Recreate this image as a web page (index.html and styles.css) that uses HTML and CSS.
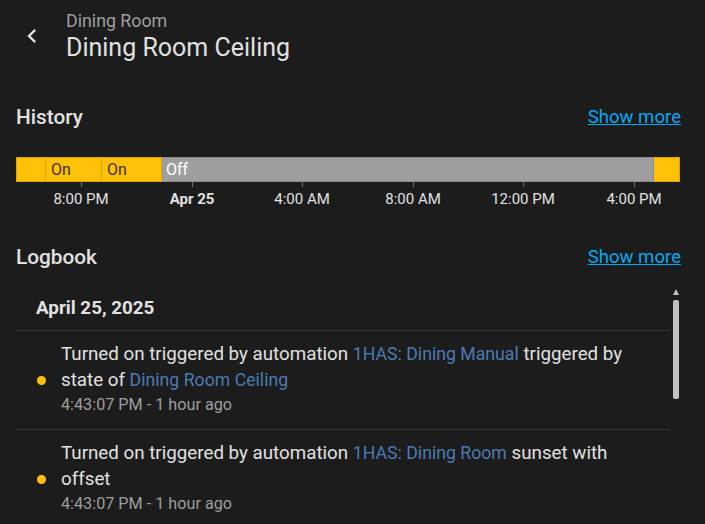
FILE: index.html
```html
<!DOCTYPE html>
<html>
<head>
<meta charset="utf-8">
<link rel="stylesheet" href="styles.css">
</head>
<body>
<div class="page">
  <header class="header">
    <button class="back" aria-label="Back">
      <svg viewBox="0 0 24 24" width="28" height="28"><path fill="currentColor" d="M15.41,16.58L10.83,12L15.41,7.41L14,6L8,12L14,18L15.41,16.58Z"/></svg>
    </button>
    <div class="titles">
      <div class="subtitle">Dining Room</div>
      <div class="title">Dining Room Ceiling</div>
    </div>
  </header>

  <section class="section history">
    <div class="section-head">
      <h2>History</h2>
      <a class="more" href="#">Show more</a>
    </div>
    <div class="timeline">
      <div class="bar">
        <div class="seg on" style="width:30px"></div>
        <div class="seg on" style="width:56px"><span>On</span></div>
        <div class="seg on" style="width:60px"><span>On</span></div>
        <div class="seg off" style="width:492px"><span>Off</span></div>
        <div class="seg on" style="width:26px"></div>
      </div>
      <div class="axis">
        <div class="tick" style="left:65px"><i></i><span>8:00 PM</span></div>
        <div class="tick bold" style="left:176px"><i></i><span>Apr 25</span></div>
        <div class="tick" style="left:286px"><i></i><span>4:00 AM</span></div>
        <div class="tick" style="left:397px"><i></i><span>8:00 AM</span></div>
        <div class="tick" style="left:507px"><i></i><span>12:00 PM</span></div>
        <div class="tick" style="left:618px"><i></i><span>4:00 PM</span></div>
      </div>
    </div>
  </section>

  <section class="section logbook">
    <div class="section-head">
      <h2>Logbook</h2>
      <a class="more" href="#">Show more</a>
    </div>
    <div class="log">
      <div class="date">April 25, 2025</div>
      <div class="entry">
        <span class="dot"></span>
        <div class="entry-body">
          <p class="msg">Turned on triggered by automation <a href="#">1HAS: Dining Manual</a> triggered by state of <a href="#">Dining Room Ceiling</a></p>
          <div class="time">4:43:07 PM - 1 hour ago</div>
        </div>
      </div>
      <div class="entry">
        <span class="dot"></span>
        <div class="entry-body">
          <p class="msg">Turned on triggered by automation <a href="#">1HAS: Dining Room</a> sunset with offset</p>
          <div class="time">4:43:07 PM - 1 hour ago</div>
        </div>
      </div>
      <div class="scrollbar"><span class="arrow"></span><span class="thumb"></span></div>
    </div>
  </section>
</div>
</body>
</html>
```

FILE: styles.css
```css
* { box-sizing: border-box; }
html, body {
  margin: 0;
  background: #1c1c1c;
  height: 100%;
  overflow: hidden;
}
body {
  font-family: Roboto, "Noto Sans", sans-serif;
  color: #e1e1e1;
}
.page {
  width: 705px;
}
.header {
  display: flex;
  align-items: flex-start;
  padding: 8px 16px 0 18px;
  height: 76px;
}
.back {
  background: none;
  border: 0;
  padding: 0;
  margin: 14px 20px 0 0;
  width: 28px;
  height: 28px;
  color: #e1e1e1;
  display: flex;
}
.titles {
  display: flex;
  flex-direction: column;
}
.subtitle {
  font-size: 17.8px;
  line-height: 26px;
  color: #9e9e9e;
}
.title {
  font-size: 25px;
  line-height: 28px;
  color: #e1e1e1;
}
.section {
  padding: 0 24px 0 16px;
}
.section-head {
  display: flex;
  justify-content: space-between;
  align-items: center;
  height: 40px;
}
.section-head h2 {
  margin: 0;
  font-size: 20.8px;
  font-weight: 500;
  color: #e1e1e1;
}
.more {
  color: #03a9f4;
  font-size: 18.6px;
  text-decoration: underline;
}
.history {
  padding-top: 21px;
}
.timeline {
  padding-top: 20px;
  position: relative;
}
.bar {
  display: flex;
  height: 25px;
  width: 664px;
}
.seg {
  height: 100%;
  font-size: 16px;
  display: flex;
  align-items: center;
  padding-left: 5px;
  border: 1px solid rgba(0, 0, 0, 0.12);
  border-left: 0;
}
.seg:first-child { border-left: 1px solid rgba(0,0,0,0.12); }
.seg.on {
  background: #ffc107;
  color: #3a2e00;
  border-color: #d9a406;
}
.seg.off {
  background: #9e9e9e;
  color: #ffffff;
  border-color: #8a8a8a;
  padding-left: 4px;
}
.axis {
  position: relative;
  height: 30px;
  width: 664px;
}
.tick {
  position: absolute;
  top: 0;
  width: 0;
}
.tick i {
  display: block;
  width: 1px;
  height: 5px;
  background: #6e6e6e;
}
.tick span {
  position: absolute;
  top: 8px;
  left: 0;
  transform: translateX(-50%);
  white-space: nowrap;
  font-size: 15px;
  color: #e1e1e1;
}
.tick.bold span { font-weight: 700; }
.logbook {
  padding-top: 25px;
}
.log {
  position: relative;
  margin-top: 13px;
}
.date {
  font-size: 18.8px;
  font-weight: 700;
  padding: 6px 0 0 20px;
  height: 41px;
  border-bottom: 1px solid #333333;
  margin-right: 10px;
  line-height: 24px;
}
.entry {
  display: flex;
  align-items: center;
  padding: 10px 0 12px 21px;
  border-bottom: 1px solid #333333;
  margin-right: 10px;
}
.dot {
  width: 9px;
  height: 9px;
  border-radius: 50%;
  background: #ffc107;
  flex: none;
  margin-right: 15px;
  margin-top: 2px;
}
.entry-body {
  width: 588px;
}
.msg {
  margin: 0;
  font-size: 18.75px;
  line-height: 26px;
  color: #e1e1e1;
}
.msg a {
  color: #4b7bb3;
  font-size: 17.7px;
  text-decoration: none;
}
.time {
  font-size: 16.2px;
  line-height: 24px;
  color: #9e9e9e;
}
.scrollbar {
  position: absolute;
  right: 2px;
  top: -1px;
  width: 6px;
  height: 112px;
}
.scrollbar .arrow {
  position: absolute;
  top: 0;
  left: 0;
  width: 0;
  height: 0;
  border-left: 3px solid transparent;
  border-right: 3px solid transparent;
  border-bottom: 6px solid #c1c1c1;
}
.scrollbar .thumb {
  position: absolute;
  top: 11px;
  left: 0;
  width: 6px;
  height: 99px;
  background: #c1c1c1;
  border-radius: 2px;
}
```
